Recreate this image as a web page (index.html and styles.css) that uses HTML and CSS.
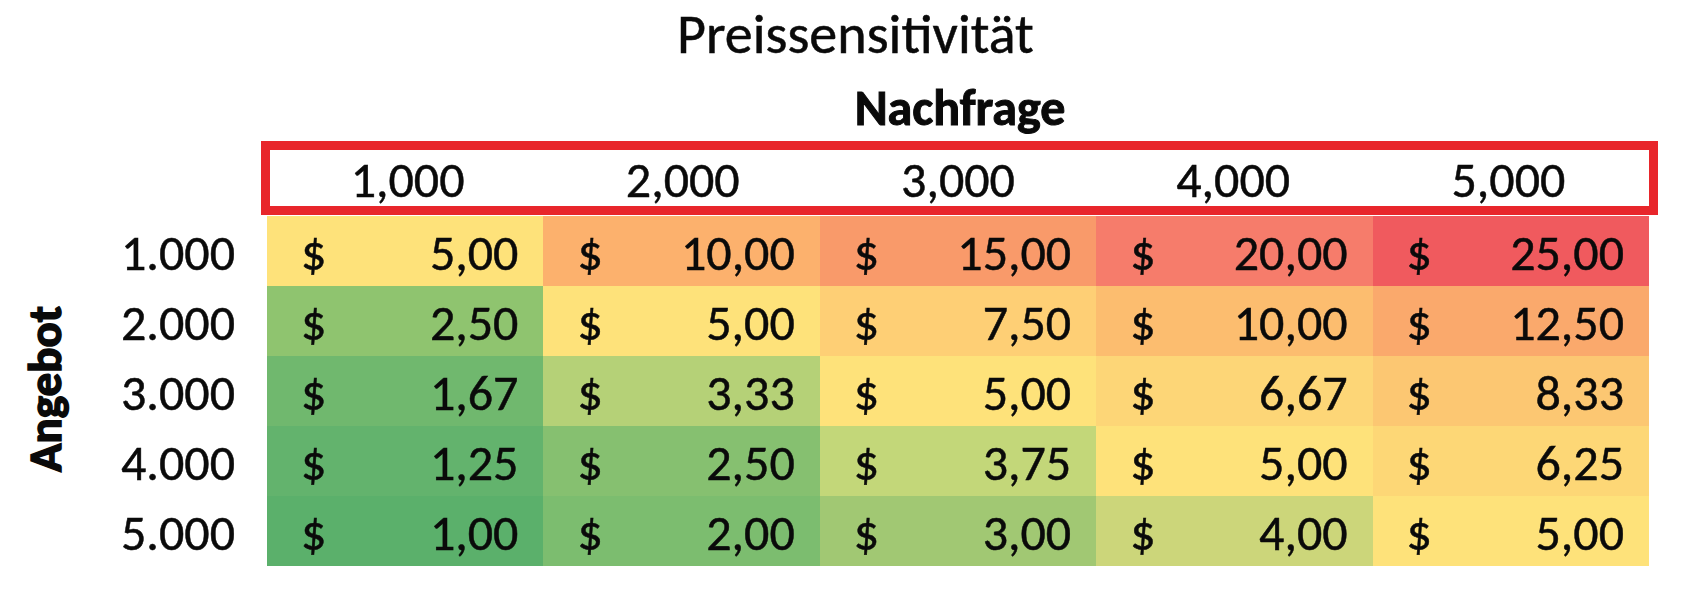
FILE: index.html
```html
<!DOCTYPE html>
<html lang="de">
<head>
<meta charset="utf-8">
<title>Preissensitivität</title>
<link rel="stylesheet" href="styles.css">
</head>
<body>
<div class="page">
  <h1 class="title">Preissensitivität</h1>
  <div class="top">
    <div class="col-axis">Nachfrage</div>
    <div class="header-box">
      <span>1,000</span><span>2,000</span><span>3,000</span><span>4,000</span><span>5,000</span>
    </div>
  </div>
  <div class="data">
    <div class="row-axis"><span>Angebot</span></div>
    <div class="grid">
      <div class="row-label">1.000</div>
      <div class="cell c-y"><span>$</span><span>5,00</span></div>
      <div class="cell c-o1"><span>$</span><span>10,00</span></div>
      <div class="cell c-o2"><span>$</span><span>15,00</span></div>
      <div class="cell c-o3"><span>$</span><span>20,00</span></div>
      <div class="cell c-r"><span>$</span><span>25,00</span></div>

      <div class="row-label">2.000</div>
      <div class="cell c-g2"><span>$</span><span>2,50</span></div>
      <div class="cell c-y"><span>$</span><span>5,00</span></div>
      <div class="cell c-a1"><span>$</span><span>7,50</span></div>
      <div class="cell c-a2"><span>$</span><span>10,00</span></div>
      <div class="cell c-a3"><span>$</span><span>12,50</span></div>

      <div class="row-label">3.000</div>
      <div class="cell c-g3"><span>$</span><span>1,67</span></div>
      <div class="cell c-l1"><span>$</span><span>3,33</span></div>
      <div class="cell c-y"><span>$</span><span>5,00</span></div>
      <div class="cell c-b1"><span>$</span><span>6,67</span></div>
      <div class="cell c-b2"><span>$</span><span>8,33</span></div>

      <div class="row-label">4.000</div>
      <div class="cell c-g4"><span>$</span><span>1,25</span></div>
      <div class="cell c-g2b"><span>$</span><span>2,50</span></div>
      <div class="cell c-l2"><span>$</span><span>3,75</span></div>
      <div class="cell c-y"><span>$</span><span>5,00</span></div>
      <div class="cell c-b3"><span>$</span><span>6,25</span></div>

      <div class="row-label">5.000</div>
      <div class="cell c-g5"><span>$</span><span>1,00</span></div>
      <div class="cell c-g3b"><span>$</span><span>2,00</span></div>
      <div class="cell c-l3"><span>$</span><span>3,00</span></div>
      <div class="cell c-l4"><span>$</span><span>4,00</span></div>
      <div class="cell c-y"><span>$</span><span>5,00</span></div>
    </div>
  </div>
</div>
</body>
</html>
```
FILE: styles.css
```css
html, body {
  margin: 0;
  padding: 0;
  background: #ffffff;
}
body {
  font-family: "Carlito", "Calibri", "Lato", sans-serif;
  color: #0a0a0a;
  width: 1699px;
  height: 608px;
  overflow: hidden;
  -webkit-text-stroke: 0.5px #0a0a0a;
}
.page {
  padding-top: 6px;
}
.title {
  margin: 0;
  padding-left: 12px;
  font-size: 56px;
  line-height: 56px;
  font-weight: 400;
  text-align: center;
}
.top {
  margin-left: 267px;
  width: 1382px;
}
.col-axis {
  margin-top: 21px;
  padding-left: 4px;
  font-size: 50px;
  font-weight: 700;
  line-height: 50px;
  text-align: center;
  -webkit-text-stroke: 1px #0a0a0a;
}
.header-box {
  margin: 8px -9px 0 -6px;
  height: 53px;
  border: 9px solid #e8262b;
  display: grid;
  grid-template-columns: repeat(5, 1fr);
  padding: 3px 3px 0 0;
  font-size: 50px;
  line-height: 53px;
  text-align: center;
}
.data {
  display: flex;
  margin-top: 1px;
}
.row-axis {
  width: 90px;
  display: flex;
  align-items: center;
  justify-content: center;
}
.row-axis span {
  writing-mode: vertical-rl;
  transform: rotate(180deg);
  font-size: 47px;
  font-weight: 900;
  line-height: 47px;
  padding-top: 4px;
  -webkit-text-stroke: 1.5px #0a0a0a;
}
.grid {
  display: grid;
  width: 1559px;
  grid-template-columns: 177px repeat(5, 1fr);
  grid-auto-rows: 70px;
}
.row-label {
  text-align: right;
  padding-right: 32px;
  padding-top: 4px;
  font-size: 50px;
  line-height: 66px;
}
.cell {
  display: flex;
  justify-content: space-between;
  padding: 4px 25px 0 34px;
  font-size: 50px;
  line-height: 66px;
}
.c-y { background: #fee27a; }
.c-o1 { background: #fcb16d; }
.c-o2 { background: #f99a6a; }
.c-o3 { background: #f67c6b; }
.c-r { background: #f05a5e; }
.c-a1 { background: #fecf75; }
.c-a2 { background: #fcbd6f; }
.c-a3 { background: #faa96c; }
.c-b1 { background: #fdd677; }
.c-b2 { background: #fcc772; }
.c-b3 { background: #fdd776; }
.c-g2 { background: #8fc46f; }
.c-g3 { background: #70b86e; }
.c-g4 { background: #63b36d; }
.c-g5 { background: #5bb06b; }
.c-g2b { background: #86c070; }
.c-g3b { background: #7cbd6f; }
.c-l1 { background: #b5d177; }
.c-l2 { background: #c3d779; }
.c-l3 { background: #a1c873; }
.c-l4 { background: #ccd67a; }
```
